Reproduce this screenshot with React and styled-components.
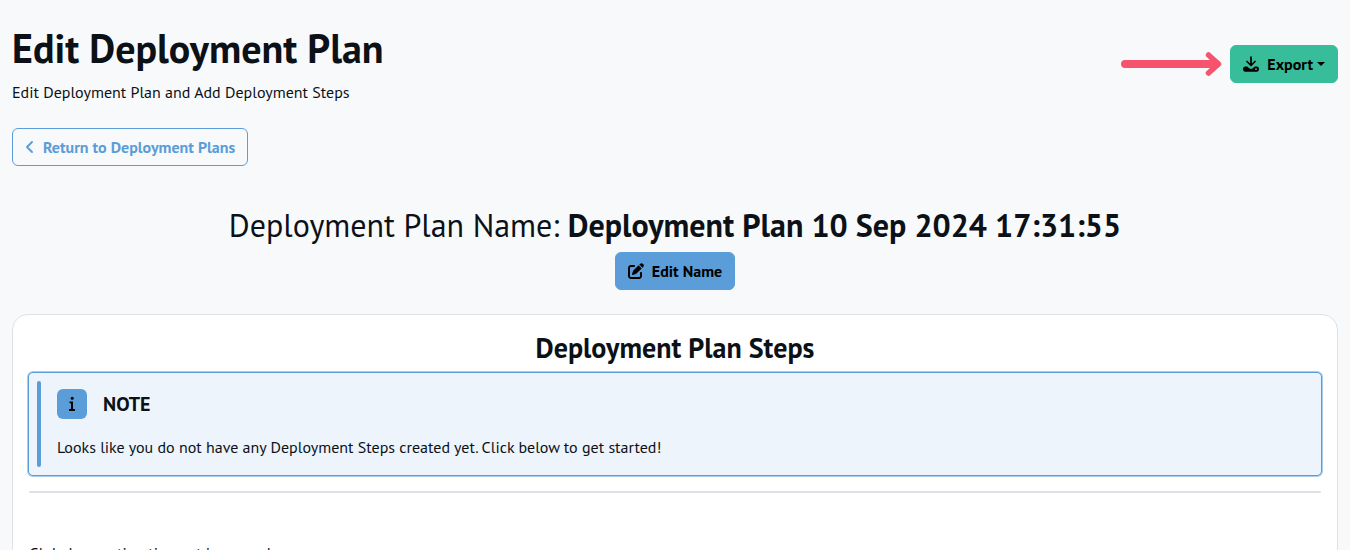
import React from "react";
import styled, { createGlobalStyle } from "styled-components";
import { FaPenToSquare } from "react-icons/fa6";

const GlobalStyle = createGlobalStyle`
  *, *::before, *::after { box-sizing: border-box; }
  body {
    margin: 0;
    background: #f8f9fb;
    color: #0b1117;
    font-family: "PT Sans", "Noto Sans", "Open Sans", sans-serif;
    font-size: 16px;
    line-height: 24px;
  }
`;

const Page = styled.main`
  padding: 24px 12px;
`;

const Header = styled.header`
  display: flex;
  align-items: center;
  justify-content: space-between;
  margin-bottom: 24px;
`;

const Title = styled.h1`
  margin: 0 0 8px;
  font-size: 40px;
  font-weight: 700;
  line-height: 48px;
`;

const Text = styled.p`
  margin: 0;
`;

const Actions = styled.div`
  display: flex;
  align-items: center;
  gap: 8px;
`;

const palette = {
  success: { bg: "#38bd9a", border: "#38bd9a", fg: "#000" },
  primary: { bg: "#5b9dd9", border: "#5b9dd9", fg: "#000" },
  outline: { bg: "transparent", border: "#5b9dd9", fg: "#5b9dd9" },
};

const Button = styled.button`
  display: inline-flex;
  align-items: center;
  gap: 8px;
  height: 38px;
  padding: 0 12px;
  border: 1px solid ${(p) => palette[p.$tone].border};
  border-radius: 6px;
  background: ${(p) => palette[p.$tone].bg};
  color: ${(p) => palette[p.$tone].fg};
  font-family: inherit;
  font-size: 16px;
  font-weight: 700;
  line-height: 24px;
  cursor: pointer;
`;

const Caret = styled.span`
  margin-left: -4px;
  border: 4px solid transparent;
  border-top-color: currentColor;
  border-bottom: 0;
`;

const PlanName = styled.section`
  display: flex;
  flex-direction: column;
  align-items: center;
  gap: 8px;
  margin: 40px 0 24px;
`;

const PlanTitle = styled.h2`
  margin: 0;
  font-size: 32px;
  font-weight: 400;
  line-height: 38px;
`;

const Card = styled.section`
  padding: 16px;
  border: 1px solid #dee2e6;
  border-radius: 16px;
  background: #fff;
`;

const CardTitle = styled.h3`
  margin: 0 0 8px;
  font-size: 28px;
  font-weight: 700;
  line-height: 33px;
  text-align: center;
`;

const Note = styled.div`
  display: flex;
  gap: 16px;
  margin: 0 -1px;
  padding: 8px;
  border: 1px solid #5b9dd9;
  border-radius: 5px;
  box-shadow: 0 0 0 1px #a9cdec;
  background: #edf4fc;
`;

const NoteBar = styled.div`
  width: 4px;
  border-radius: 2px;
  background: #5b9dd9;
`;

const NoteBody = styled.div`
  padding: 8px 0;
`;

const NoteHead = styled.div`
  display: flex;
  align-items: center;
  gap: 16px;
  margin-bottom: 16px;
`;

const NoteBadge = styled.span`
  display: grid;
  place-items: center;
  width: 30px;
  height: 30px;
  border-radius: 6px;
  background: #5b9dd9;
  color: #000;
`;

const NoteTitle = styled.h4`
  margin: 0;
  font-size: 20px;
  font-weight: 700;
  line-height: 24px;
`;

const Divider = styled.hr`
  height: 2px;
  margin: 15px 0 48px;
  border: 0;
  border-radius: 1px;
  background: #dee2e6;
`;

const PointerArrow = () => (
  <svg width="101" height="26" viewBox="0 0 101 26" fill="none" stroke="#f5536e" strokeLinecap="round" strokeLinejoin="round" aria-hidden="true">
    <path d="M4 13H95" strokeWidth="8" />
    <path d="M87.500 4L97.500 13L87.500 22" strokeWidth="5.500" />
  </svg>
);

const DownloadIcon = () => (
  <svg width="16" height="16" viewBox="0 0 16 16" fill="none" stroke="currentColor" strokeLinecap="round" strokeLinejoin="round" aria-hidden="true">
    <path d="M8 1V9M4 5.500L8 9.500L12 5.500" strokeWidth="1.700" />
    <path fillRule="evenodd" stroke="none" fill="currentColor" d="M2 10.600H4.200L6.200 12.200Q8 13.500 9.800 12.200L11.800 10.600H14Q16 10.900 16 13.100Q16 15.600 14 15.700H2Q0 15.600 0 13.100Q0 10.900 2 10.600ZM13 12.300A.9.900 0 1 0 13 14.100A.9.900 0 1 0 13 12.300Z" />
  </svg>
);

const ChevronIcon = () => (
  <svg width="10" height="14" viewBox="0 0 10 14" fill="none" stroke="currentColor" strokeWidth="1.900" strokeLinecap="round" strokeLinejoin="round" aria-hidden="true">
    <path d="M7 2L2 7L7 12" />
  </svg>
);

const InfoIcon = () => (
  <svg width="8" height="16" viewBox="0 0 8 16" fill="currentColor" aria-hidden="true">
    <circle cx="4.200" cy="2.200" r="1.500" />
    <path d="M1.500 5.500H5V13H7V15H1V13H3V7.300H1.500Z" />
  </svg>
);

export default function App() {
  return (
    <>
      <GlobalStyle />
      <Page>
        <Header>
          <div>
            <Title>Edit Deployment Plan</Title>
            <Text>Edit Deployment Plan and Add Deployment Steps</Text>
          </div>
          <Actions>
            <PointerArrow />
            <Button type="button" $tone="success" aria-haspopup="menu">
              <DownloadIcon />
              Export
              <Caret />
            </Button>
          </Actions>
        </Header>

        <Button type="button" $tone="outline">
          <ChevronIcon />
          Return to Deployment Plans
        </Button>

        <PlanName>
          <PlanTitle>
            Deployment Plan Name: <strong>Deployment Plan 10 Sep 2024 17:31:55</strong>
          </PlanTitle>
          <Button type="button" $tone="primary">
            <FaPenToSquare size={16} aria-hidden="true" />
            Edit Name
          </Button>
        </PlanName>

        <Card>
          <CardTitle>Deployment Plan Steps</CardTitle>
          <Note role="note">
            <NoteBar />
            <NoteBody>
              <NoteHead>
                <NoteBadge>
                  <InfoIcon />
                </NoteBadge>
                <NoteTitle>NOTE</NoteTitle>
              </NoteHead>
              <Text>
                Looks like you do not have any Deployment Steps created yet. Click below to get started!
              </Text>
            </NoteBody>
          </Note>
          <Divider />
          <Text>Global execution timeout in seconds</Text>
        </Card>
      </Page>
    </>
  );
}
